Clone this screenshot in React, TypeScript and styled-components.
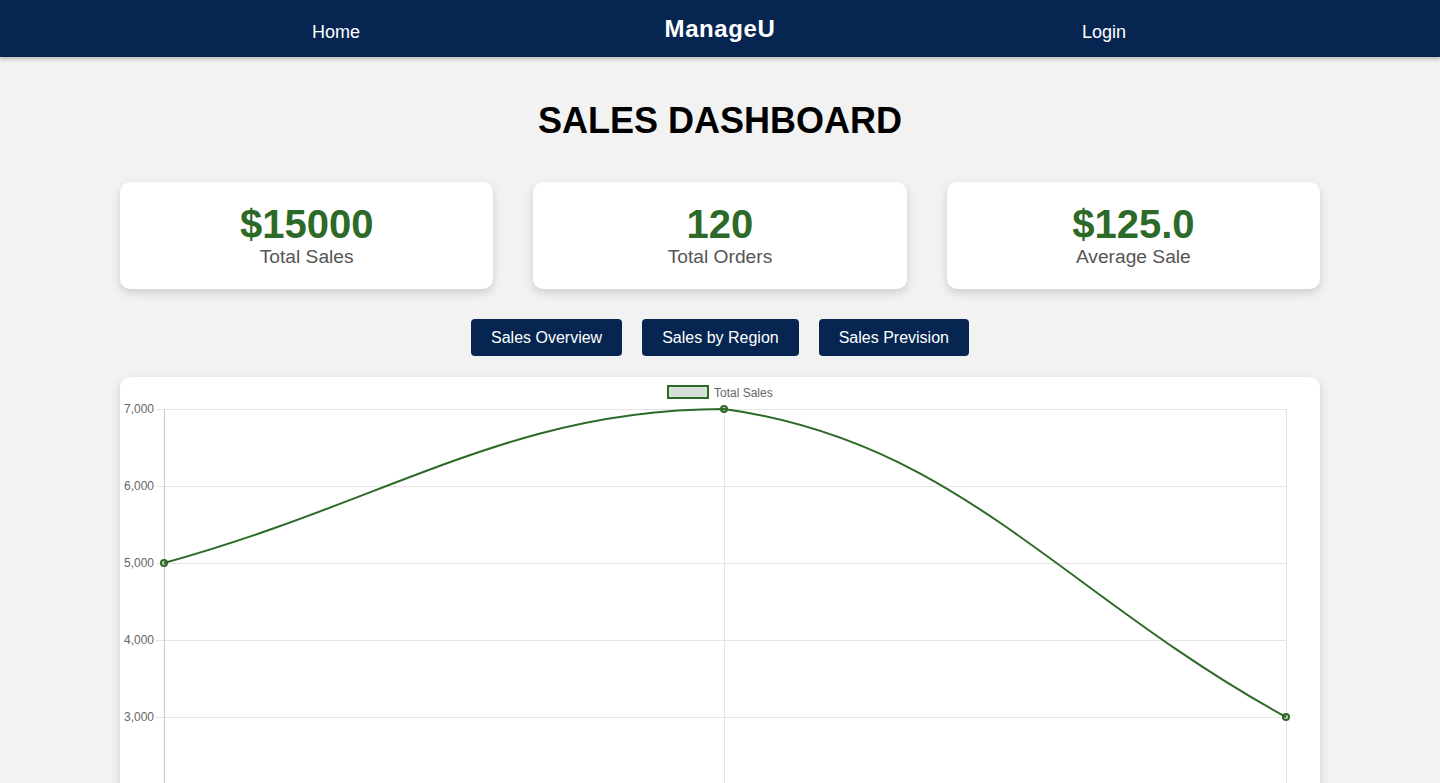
import React from "react";
import styled, { createGlobalStyle } from "styled-components";

const GlobalStyle = createGlobalStyle`
  * { box-sizing: border-box; }
  body {
    margin: 0;
    background: #f2f2f2;
    font-family: "Liberation Sans", Arial, Helvetica, sans-serif;
    color: #000;
  }
`;

const NavBar = styled.nav`
  height: 57px;
  background: #062651;
  box-shadow: 0 2px 4px rgba(0, 0, 0, 0.25);
  display: flex;
  justify-content: center;
`;

const NavInner = styled.div`
  width: 80%;
  display: flex;
  align-items: center;
`;

const NavItem = styled.a<{ $brand?: boolean }>`
  flex: 1;
  text-align: center;
  color: #fff;
  text-decoration: none;
  font-size: ${(p) => (p.$brand ? "24px" : "18px")};
  font-weight: ${(p) => (p.$brand ? 700 : 400)};
  letter-spacing: ${(p) => (p.$brand ? "0.6px" : "0")};
  margin-top: ${(p) => (p.$brand ? "0" : "7px")};
`;

const Main = styled.main`
  width: 1200px;
  margin: 0 auto;
  display: flex;
  flex-direction: column;
  align-items: center;
`;

const Title = styled.h1`
  font-size: 36px;
  font-weight: 700;
  margin: 43px 0 41px;
  line-height: 41px;
`;

const Cards = styled.div`
  width: 100%;
  display: grid;
  grid-template-columns: repeat(3, 1fr);
  gap: 40px;
`;

const Card = styled.div`
  background: #fff;
  border-radius: 10px;
  box-shadow: 0 4px 10px rgba(0, 0, 0, 0.15);
  padding: 20px 20px 22px;
  display: flex;
  flex-direction: column;
  align-items: center;
`;

const Value = styled.div`
  font-size: 40px;
  font-weight: 700;
  color: #2d6a27;
  line-height: 45px;
`;

const Label = styled.div`
  font-size: 19.2px;
  color: #555;
  line-height: 20px;
`;

const Buttons = styled.div`
  display: flex;
  gap: 20px;
  margin: 30px 0 21px;
`;

const TabButton = styled.button`
  background: #062651;
  color: #fff;
  border: none;
  border-radius: 4px;
  padding: 10px 20px;
  font-family: "Liberation Sans", Arial, sans-serif;
  font-size: 16px;
  line-height: 17px;
  cursor: pointer;
`;

const ChartCard = styled.div`
  width: 100%;
  background: #fff;
  border-radius: 10px;
  box-shadow: 0 4px 10px rgba(0, 0, 0, 0.15);
  margin-bottom: 40px;
`;

const ChartSvg = styled.svg`
  display: block;
  width: 100%;
  height: 460px;
`;

const green = "#2d6a27";
const ticks = [7000, 6000, 5000, 4000, 3000, 2000];
const top = 32;
const step = 77;
const left = 44;
const right = 1166;
const xs = [44, 604, 1166];

function SalesChart() {
  const bottom = top + step * (ticks.length - 1);
  return (
    <ChartSvg viewBox="0 0 1200 460">
      <rect x={548} y={9} width={40} height={12} fill="rgba(45,106,39,0.2)" stroke={green} strokeWidth={2} />
      <text x={594} y={19.5} fontSize={12} fill="#666" fontFamily="Liberation Sans, Arial, sans-serif">
        Total Sales
      </text>
      {ticks.map((t, i) => {
        const y = top + i * step;
        return (
          <g key={t}>
            <line x1={left - 8} x2={right} y1={y + 0.5} y2={y + 0.5} stroke="#e5e5e5" strokeWidth={1} />
            {t >= 3000 && (
              <text x={34} y={y + 4} fontSize={12} fill="#666" textAnchor="end" fontFamily="Liberation Sans, Arial, sans-serif">
                {t.toLocaleString("en-US")}
              </text>
            )}
          </g>
        );
      })}
      {xs.map((x, i) => (
        <line
          key={x}
          x1={x + 0.5}
          x2={x + 0.5}
          y1={top}
          y2={bottom + 8}
          stroke={i === 0 ? "#c8c8c8" : "#e5e5e5"}
          strokeWidth={1}
        />
      ))}
      <path
        d="M44,186 C268,124.4 390.6,32 604,32 C839.4,64.3 941.2,216.8 1166,340"
        fill="none"
        stroke={green}
        strokeWidth={2}
      />
      {[
        [44, 186],
        [604, 32],
        [1166, 340],
      ].map(([x, y]) => (
        <circle key={x} cx={x} cy={y} r={3} fill="rgba(45,106,39,0.2)" stroke={green} strokeWidth={2} />
      ))}
    </ChartSvg>
  );
}

export default function App() {
  return (
    <>
      <GlobalStyle />
      <NavBar>
        <NavInner>
          <NavItem href="#">Home</NavItem>
          <NavItem href="#" $brand>
            ManageU
          </NavItem>
          <NavItem href="#">Login</NavItem>
        </NavInner>
      </NavBar>
      <Main>
        <Title>SALES DASHBOARD</Title>
        <Cards>
          <Card>
            <Value>$15000</Value>
            <Label>Total Sales</Label>
          </Card>
          <Card>
            <Value>120</Value>
            <Label>Total Orders</Label>
          </Card>
          <Card>
            <Value>$125.0</Value>
            <Label>Average Sale</Label>
          </Card>
        </Cards>
        <Buttons>
          <TabButton>Sales Overview</TabButton>
          <TabButton>Sales by Region</TabButton>
          <TabButton>Sales Prevision</TabButton>
        </Buttons>
        <ChartCard>
          <SalesChart />
        </ChartCard>
      </Main>
    </>
  );
}
